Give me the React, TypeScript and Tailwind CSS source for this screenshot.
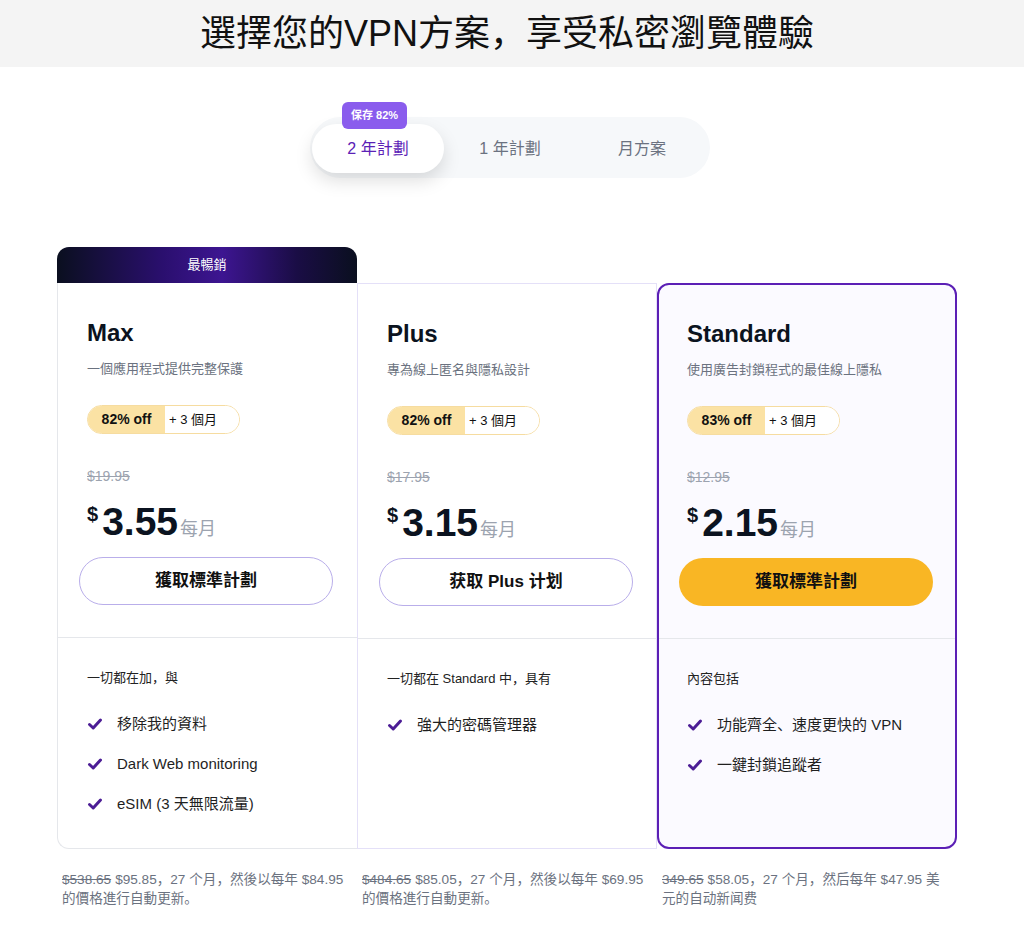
import React from 'react';

const font = { fontFamily: '"Liberation Sans", "Noto Sans CJK SC", "Noto Sans", sans-serif' };

type Plan = {
  name: string;
  subtitle: string;
  off: string;
  oldPrice: string;
  price: string;
  cta: string;
  primary?: boolean;
  listTitle: string;
  items: string[];
  footStrike: string;
  foot: string;
};

const plans: Plan[] = [
  {
    name: 'Max',
    subtitle: '一個應用程式提供完整保護',
    off: '82% off',
    oldPrice: '$19.95',
    price: '3.55',
    cta: '獲取標準計劃',
    listTitle: '一切都在加，與',
    items: ['移除我的資料', 'Dark Web monitoring', 'eSIM (3 天無限流量)'],
    footStrike: '$538.65',
    foot: '$95.85，27 个月，然後以每年 $84.95 的價格進行自動更新。',
  },
  {
    name: 'Plus',
    subtitle: '專為線上匿名與隱私設計',
    off: '82% off',
    oldPrice: '$17.95',
    price: '3.15',
    cta: '获取 Plus 计划',
    listTitle: '一切都在 Standard 中，具有',
    items: ['強大的密碼管理器'],
    footStrike: '$484.65',
    foot: '$85.05，27 个月，然後以每年 $69.95 的價格進行自動更新。',
  },
  {
    name: 'Standard',
    subtitle: '使用廣告封鎖程式的最佳線上隱私',
    off: '83% off',
    oldPrice: '$12.95',
    price: '2.15',
    cta: '獲取標準計劃',
    primary: true,
    listTitle: '內容包括',
    items: ['功能齊全、速度更快的 VPN', '一鍵封鎖追蹤者'],
    footStrike: '349.65',
    foot: '$58.05，27 个月，然后每年 $47.95 美元的自动新闻费',
  },
];

function Check() {
  return (
    <svg width="16" height="14" viewBox="0 0 16 14" className="shrink-0">
      <path
        d="M2.5 7.5 L6.2 11 L13.5 3"
        fill="none"
        stroke="#4c1d95"
        strokeWidth="3"
        strokeLinecap="round"
        strokeLinejoin="round"
      />
    </svg>
  );
}

function PlanCard({ plan, index }: { plan: Plan; index: number }) {
  const frame =
    index === 0
      ? 'border border-t-0 border-r-0 border-[#e5e7eb] rounded-bl-xl bg-white'
      : index === 1
        ? 'border border-[#e4e0f8] bg-white'
        : 'border-2 border-[#5b1fb5] rounded-xl bg-[#fbfaff]';
  return (
    <div className={`relative flex w-[300px] flex-col ${frame}`}>
      {index === 0 && (
        <div className="absolute -top-[36px] -left-px flex h-[36px] w-[300px] items-center justify-center rounded-t-xl bg-[linear-gradient(90deg,#0a0f1f_0%,#2a0f6e_35%,#3d1591_55%,#1a0d45_80%,#0a0f1f_100%)] text-[13px] text-white">
          最暢銷
        </div>
      )}
      <div className={`flex flex-col pb-[32px] ${index === 2 ? 'px-[20px] pt-[35px]' : 'px-[21px] pt-[36px]'}`}>
        <div className="px-[8px]">
          <h2 className="text-[24px] font-bold leading-[28px] text-[#0b1320]">{plan.name}</h2>
          <p className="mt-[12px] text-[13px] leading-[20px] text-[#6b7280]">{plan.subtitle}</p>
          <div className="mt-[26px] flex h-[29px] w-fit items-center overflow-hidden rounded-full border border-[#f6dca0]">
            <span className="flex h-full w-[77px] items-center justify-center bg-[#fbe2a4] text-[14px] font-bold text-[#111]">
              {plan.off}
            </span>
            <span className="flex h-full w-[74px] items-center bg-white pl-[4px] text-[13px] text-[#111]">
              + 3 個月
            </span>
          </div>
          <p className="mt-[32px] text-[14px] leading-[20px] text-[#9ca3af] line-through">{plan.oldPrice}</p>
          <div className="mt-[14px] flex items-baseline leading-[44px]">
            <span className="self-start pt-[4px] text-[20px] font-bold leading-[20px] text-[#0b1320]">$</span>
            <span className="ml-[4px] text-[39px] font-bold text-[#0b1320]">{plan.price}</span>
            <span className="ml-[2px] text-[18px] text-[#9ca3af]">每月</span>
          </div>
        </div>
        <button
          className={`mt-[6px] h-[48px] w-[254px] rounded-full text-[17px] font-bold text-[#111] ${
            plan.primary ? 'bg-[#f9b624]' : 'border border-[#b9aeea] bg-white'
          }`}
        >
          {plan.cta}
        </button>
      </div>
      <div className="border-t border-[#e5e7eb]" />
      <div className={`flex flex-1 flex-col pb-[32px] pt-[30px] ${index === 2 ? 'px-[28px]' : 'px-[29px]'}`}>
        <p className="text-[13px] leading-[20px] text-[#222]">{plan.listTitle}</p>
        <ul className="mt-[24px] flex flex-col gap-[16px]">
          {plan.items.map((item) => (
            <li key={item} className="flex h-[24px] items-center gap-[14px] text-[15px] text-[#1f1f1f]">
              <Check />
              <span>{item}</span>
            </li>
          ))}
        </ul>
      </div>
    </div>
  );
}

export default function App() {
  return (
    <div className="min-h-[950px] w-full bg-white" style={font}>
      {/* Header */}
      <div className="w-full bg-[#f4f4f4]">
        <div className="flex h-[67px] w-[1014px] items-center justify-center">
          <h1 className="text-[36px] leading-[44px] text-[#111]">選擇您的VPN方案，享受私密瀏覽體驗</h1>
        </div>
      </div>

      <div className="w-[1014px]">
        {/* Term tabs */}
        <div className="mt-[50px] flex justify-center pl-[6px]">
          <div className="flex h-[61px] items-center rounded-full bg-[#f6f8fa] px-[2px] pb-[5px] pt-[7px]">
            <div className="relative flex h-[49px] w-[132px] items-center justify-center rounded-full bg-white text-[16px] text-[#5b21b6] shadow-[0_8px_18px_rgba(0,0,0,0.13)]">
              <span className="absolute -top-[22px] left-[30px] flex h-[27px] items-center rounded-md bg-[#8a5ced] px-[9px] text-[11px] font-bold text-white">
                保存 82%
              </span>
              2 年計劃
            </div>
            <div className="flex h-[49px] w-[132px] items-center justify-center text-[16px] text-[#6b7280]">1 年計劃</div>
            <div className="flex h-[49px] w-[132px] items-center justify-center text-[16px] text-[#6b7280]">月方案</div>
          </div>
        </div>

        {/* Plans */}
        <div className="mx-auto mt-[105px] flex w-[900px]">
          {plans.map((p, i) => (
            <PlanCard key={p.name} plan={p} index={i} />
          ))}
        </div>

        {/* Footnotes */}
        <div className="mx-auto mt-[21px] flex w-[900px]">
          {plans.map((p) => (
            <div key={p.name} className="w-[300px] pl-[5px]">
              <p className="w-[288px] text-[13.6px] leading-[19px] text-[#6b7280]">
                <span className="mr-[4px] line-through">{p.footStrike}</span>
                {p.foot}
              </p>
            </div>
          ))}
        </div>
      </div>
    </div>
  );
}
